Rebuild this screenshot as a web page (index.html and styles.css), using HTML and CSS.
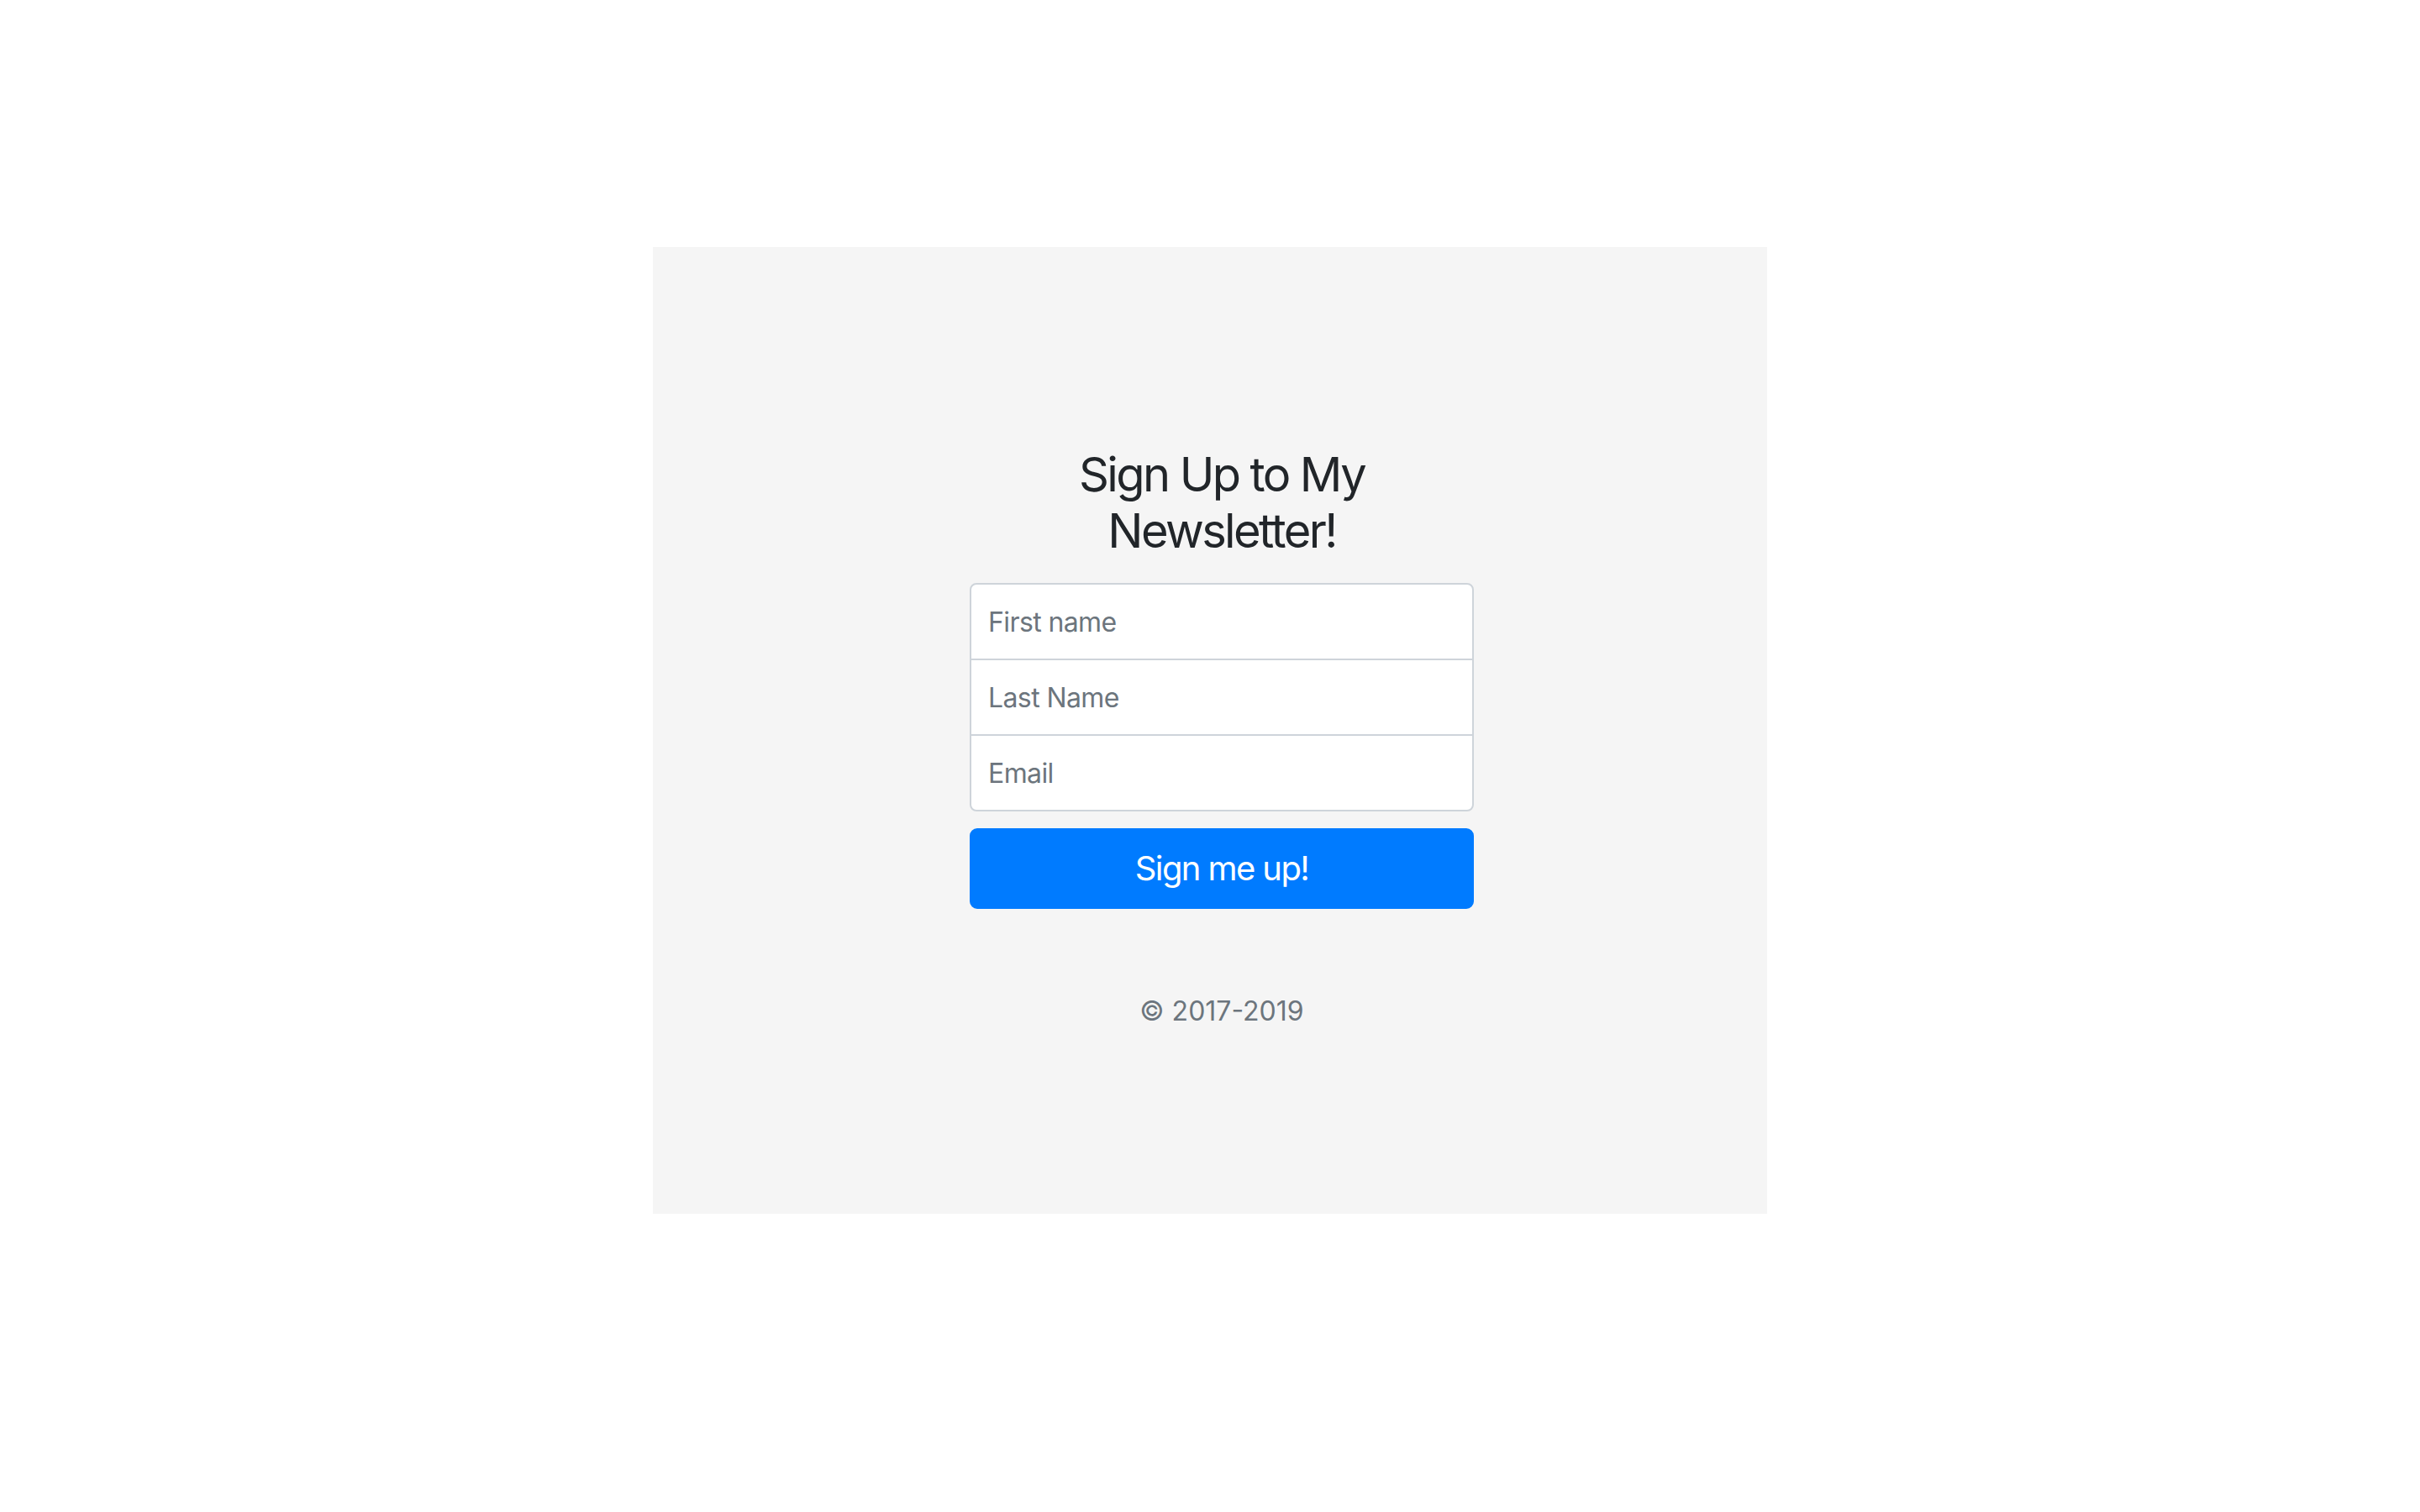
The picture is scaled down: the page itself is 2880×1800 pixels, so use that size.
FILE: index.html
```html
<!DOCTYPE html>
<html lang="en">
<head>
<meta charset="utf-8">
<title>Newsletter Signup</title>
<link rel="stylesheet" href="styles.css">
</head>
<body>
<div class="page">
  <main class="frame">
    <form class="signin">
      <h1 class="title">Sign Up to My Newsletter!</h1>
      <input class="field field-top" type="text" placeholder="First name">
      <input class="field field-mid" type="text" placeholder="Last Name">
      <input class="field field-bottom" type="email" placeholder="Email">
      <button class="btn" type="button">Sign me up!</button>
      <p class="footer">© 2017-2019</p>
    </form>
  </main>
</div>
</body>
</html>
```
FILE: styles.css
```css
html, body {
  margin: 0;
  padding: 0;
  background: #ffffff;
}
body {
  font-family: Inter, "Noto Sans", "Liberation Sans", sans-serif;
  color: #212529;
}
.page {
  padding-top: 294px;
  height: 1800px;
  box-sizing: border-box;
}
.frame {
  width: 1326px;
  height: 1151px;
  margin: 0 auto;
  background: #f5f5f5;
  box-sizing: border-box;
  padding-top: 234px;
  padding-left: 28px;
  display: flex;
  flex-direction: column;
  align-items: center;
}
.signin {
  width: 600px;
  display: flex;
  flex-direction: column;
  text-align: center;
}
.title {
  margin: 0 0 28px;
  padding-top: 4px;
  font-size: 56px;
  line-height: 67px;
  font-weight: 400;
  letter-spacing: -2.6px;
  color: #212529;
}
.field {
  display: block;
  width: 100%;
  box-sizing: border-box;
  height: 92px;
  padding: 20px;
  font-family: inherit;
  font-size: 32px;
  line-height: 48px;
  letter-spacing: -0.6px;
  color: #495057;
  background: #ffffff;
  border: 2px solid #ced4da;
  margin: 0 0 -2px;
  outline: none;
}
.field::placeholder {
  color: #6c757d;
  opacity: 1;
}
.field-top {
  border-radius: 8px 8px 0 0;
}
.field-mid {
  border-radius: 0;
}
.field-bottom {
  border-radius: 0 0 8px 8px;
  margin-bottom: 20px;
}
.btn {
  display: block;
  width: 100%;
  height: 96px;
  border: 2px solid #007bff;
  background: #007bff;
  color: #ffffff;
  font-family: inherit;
  font-size: 40px;
  line-height: 60px;
  letter-spacing: -1.6px;
  border-radius: 9px;
  padding: 0;
  cursor: pointer;
}
.footer {
  margin: 98px 0 30px;
  font-size: 32px;
  line-height: 48px;
  color: #6c757d;
}
```
